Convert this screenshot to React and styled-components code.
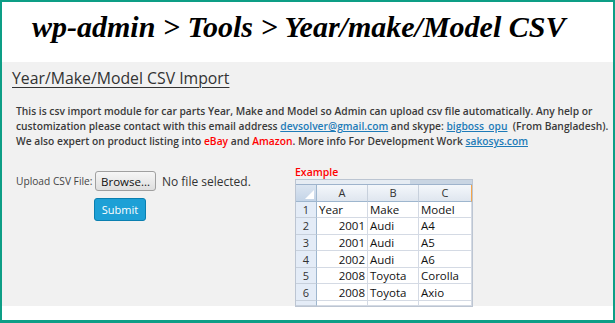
import styled, { createGlobalStyle } from "styled-components";

const Global = createGlobalStyle`
  html, body { margin: 0; padding: 0; background: #fff; }
  body { width: 615px; height: 323px; overflow: hidden; }
`
const Frame = styled.div`
  box-sizing: border-box;
  width: 615px;
  height: 323px;
  border: 2px solid #0d9e86;
  border-bottom-width: 3px;
  display: flex;
  flex-direction: column;
  background: #fff;
`
const Banner = styled.div`
  height: 60px;
  padding-left: 30px;
  display: flex;
  align-items: center;
  padding-bottom: 10px;
  box-sizing: border-box;
`
const BannerText = styled.h1`
  margin: 0;
  font-family: "Liberation Serif", "Times New Roman", serif;
  font-style: italic;
  font-weight: 700;
  font-size: 30px;
  line-height: 34px;
  color: #000;
`
const Panel = styled.div`
  background: #f1f1f1;
  height: 244px;
  padding: 4px 10px 0 10px;
  box-sizing: border-box;
  font-family: "Open Sans", "Liberation Sans", sans-serif;
  color: #333;
`
const Heading = styled.h2`
  margin: 0;
  font-weight: 400;
  font-size: 15.8px;
  line-height: 24px;
  text-decoration: underline;
  text-underline-offset: 3px;
  text-decoration-thickness: 1px;
  color: #333;
`
const Intro = styled.p`
  margin: 14px 0 0 4px;
  font-size: 10.25px;
  font-weight: 600;
  line-height: 15px;
  color: #3a3a3a;
  white-space: nowrap;
`
const Link = styled.a`
  color: #1e7bb8;
  text-decoration: underline;
`
const Brand = styled.span`
  color: #f00;
`
const Lower = styled.div`
  display: flex;
  margin-top: 13px;
`
const UploadForm = styled.div`
  width: 281px;
  padding-top: 9px;
  padding-left: 4px;
  box-sizing: border-box;
`
const UploadRow = styled.div`
  display: flex;
  align-items: center;
`
const Label = styled.span`
  font-size: 10.2px;
  color: #444;
  width: 79px;
`
const Browse = styled.button`
  height: 20px;
  width: 61px;
  padding: 0;
  border: 1px solid #a0a0a0;
  border-radius: 3px;
  background: linear-gradient(#f6f6f6, #dedede);
  font-family: "Open Sans", sans-serif;
  font-size: 11.5px;
  color: #111;
`
const FileName = styled.span`
  margin-left: 6px;
  font-size: 12px;
  color: #333;
`
const Submit = styled.button`
  margin: 7px 0 0 78px;
  width: 52px;
  height: 23px;
  padding: 0;
  border: 1px solid #0a7fb0;
  border-radius: 3px;
  background: #1da0d6;
  color: #fff;
  font-family: "Open Sans", sans-serif;
  font-size: 11px;
`
const Example = styled.div`
  display: flex;
  flex-direction: column;
  margin-top: 4px;
  margin-left: 2px;
`
const ExampleLabel = styled.span`
  color: #f00;
  font-size: 10.5px;
  font-weight: 600;
  line-height: 12px;
`
const Sheet = styled.div`
  margin-top: 1px;
  width: 176px;
  border: 1px solid #bcc5d2;
  background: #fff;
  font-family: "Open Sans", "Liberation Sans", sans-serif;
  font-size: 11.5px;
  color: #111;
`
const FormulaBar = styled.div`
  height: 4px;
  border-bottom: 1px solid #9eb3cc;
  background: linear-gradient(to right, #e6ecf3 65%, #c9d5e3 65%);
`
const Grid = styled.div`
  display: grid;
  grid-template-columns: 21px 51px 51px 1fr;
  grid-template-rows: 16.5px repeat(6, 16.6px) 5px;
`
const Corner = styled.div`
  background: linear-gradient(#dbe5f1, #c4d4e7);
  border-right: 1px solid #9eb6ce;
  border-bottom: 1px solid #9eb6ce;
  position: relative;
  &::after {
    content: "";
    position: absolute;
    right: 2px;
    bottom: 2px;
    border-left: 9px solid transparent;
    border-bottom: 9px solid #fff;
  }
`
const ColHead = styled.div`
  background: linear-gradient(#f4f7fb, #dfe6ef);
  border-right: 1px solid ${p => (p.last ? "#f5a64a" : "#c7d0dc")};
  border-bottom: 1px solid #9eb6ce;
  display: flex;
  align-items: center;
  justify-content: center;
  color: #333;
  font-size: 11px;
`
const RowHead = styled.div`
  background: #e4ecf7;
  border-right: 1px solid #9eb6ce;
  border-bottom: 1px solid #c7d0dc;
  display: flex;
  align-items: center;
  justify-content: center;
  color: #333;
  font-size: 11px;
`
const Cell = styled.div`
  border-right: 1px solid #d4dae4;
  border-bottom: 1px solid #d4dae4;
  display: flex;
  align-items: center;
  justify-content: ${p => (p.num ? "flex-end" : "flex-start")};
  padding: 0 2px;
  white-space: nowrap;
  overflow: hidden;
`
const Bottom = styled.div`
  flex: 1;
`

const rows = [
  ["Year", "Make", "Model"],
  [2001, "Audi", "A4"],
  [2001, "Audi", "A5"],
  [2002, "Audi", "A6"],
  [2008, "Toyota", "Corolla"],
  [2008, "Toyota", "Axio"],
];

export default function App() {
  return (
    <Frame>
      <Global />
      <Banner>
        <BannerText>wp-admin &gt; Tools &gt; Year/make/Model CSV</BannerText>
      </Banner>
      <Panel>
        <Heading>Year/Make/Model CSV Import</Heading>
        <Intro>
          This is csv import module for car parts Year, Make and Model so Admin can upload csv file automatically. Any help or
          <br />
          customization please contact with this email address <Link>devsolver@gmail.com</Link> and skype: <Link>bigboss_opu</Link>&nbsp; (From Bangladesh).
          <br />
          We also expert on product listing into <Brand>eBay</Brand> and <Brand>Amazon</Brand>. More info For Development Work <Link>sakosys.com</Link>
        </Intro>
        <Lower>
          <UploadForm>
            <UploadRow>
              <Label>Upload CSV File:</Label>
              <Browse>Browse...</Browse>
              <FileName>No file selected.</FileName>
            </UploadRow>
            <Submit>Submit</Submit>
          </UploadForm>
          <Example>
            <ExampleLabel>Example</ExampleLabel>
            <Sheet>
              <FormulaBar />
              <Grid>
                <Corner />
                <ColHead>A</ColHead>
                <ColHead>B</ColHead>
                <ColHead last>C</ColHead>
                {rows.map((r, i) => [
                  <RowHead key={"h" + i}>{i + 1}</RowHead>,
                  ...r.map((v, j) => (
                    <Cell key={i + "-" + j} num={typeof v === "number"}>{v}</Cell>
                  )),
                ])}
                <RowHead />
                <Cell />
                <Cell />
                <Cell />
              </Grid>
            </Sheet>
          </Example>
        </Lower>
      </Panel>
      <Bottom />
    </Frame>
  );
}
